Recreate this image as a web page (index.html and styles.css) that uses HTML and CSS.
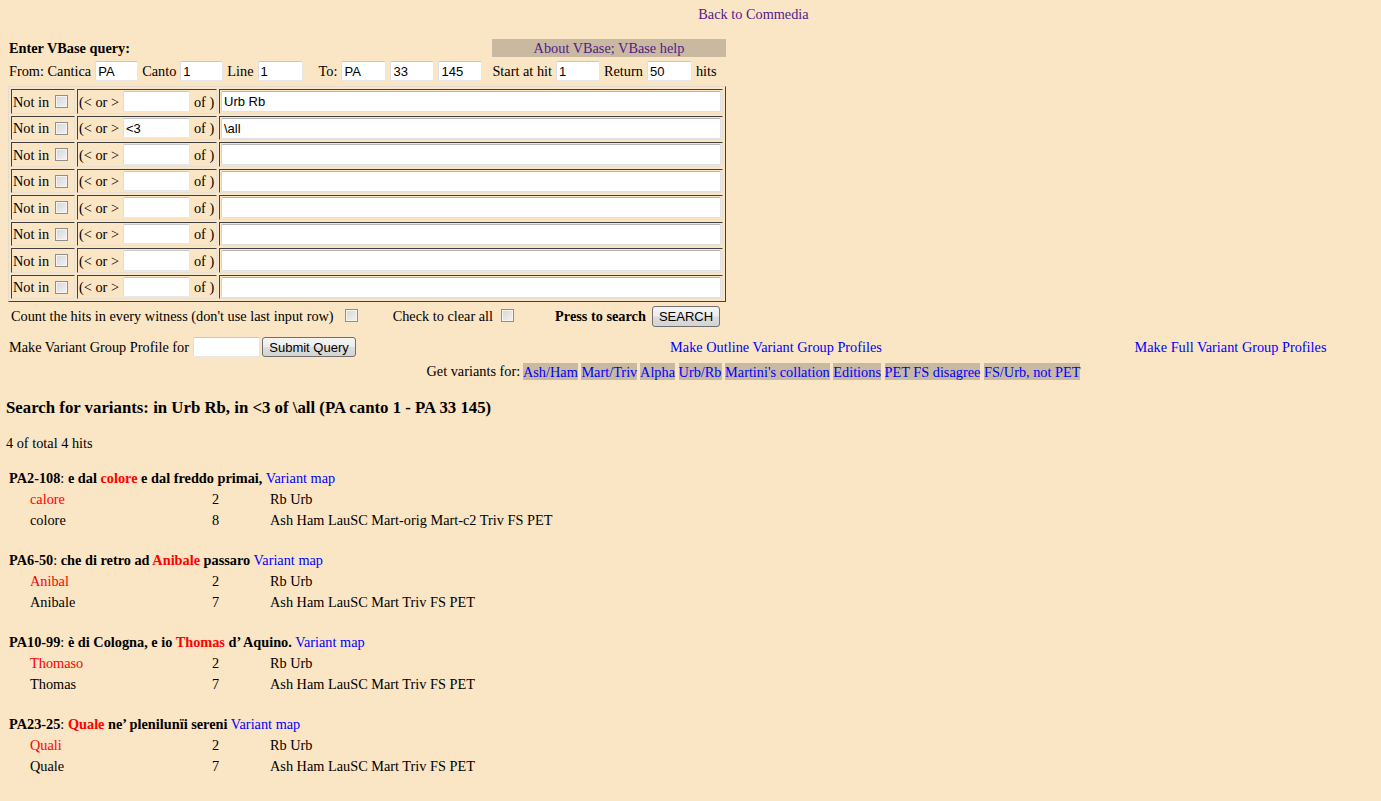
FILE: index.html
```html
<!DOCTYPE html>
<html>
<head>
<meta charset="utf-8">
<title>VBase</title>
<link rel="stylesheet" href="styles.css">
</head>
<body>
<div class="top"><a class="visited" href="#">Back to Commedia</a></div>

<form class="query">
  <div class="head-row">
    <b>Enter VBase query:</b>
    <a class="help visited" href="#">About VBase; VBase help</a>
  </div>

  <div class="range-row">
    <span>From: Cantica</span><input class="txt w43" value="PA">
    <span>Canto</span><input class="txt w43" value="1">
    <span>Line</span><input class="txt w45" value="1">
    <span class="ml-to">To:</span><input class="txt w45" value="PA"><input class="txt w44 tight" value="33"><input class="txt w44" value="145">
    <span class="ml-start">Start at hit</span><input class="txt w44" value="1">
    <span>Return</span><input class="txt w45" value="50">
    <span>hits</span>
  </div>

  <table class="crit">
    <tr><td class="c1"><span class="cell">Not in <input type="checkbox" class="cb"></span></td><td class="c2"><span class="cell">(&lt; or &gt; <input class="txt small"> <span class="of">of )</span></span></td><td class="c3"><input class="txt big" value="Urb Rb"></td></tr>
    <tr><td class="c1"><span class="cell">Not in <input type="checkbox" class="cb"></span></td><td class="c2"><span class="cell">(&lt; or &gt; <input class="txt small" value="&lt;3"> <span class="of">of )</span></span></td><td class="c3"><input class="txt big" value="\all"></td></tr>
    <tr><td class="c1"><span class="cell">Not in <input type="checkbox" class="cb"></span></td><td class="c2"><span class="cell">(&lt; or &gt; <input class="txt small"> <span class="of">of )</span></span></td><td class="c3"><input class="txt big"></td></tr>
    <tr><td class="c1"><span class="cell">Not in <input type="checkbox" class="cb"></span></td><td class="c2"><span class="cell">(&lt; or &gt; <input class="txt small"> <span class="of">of )</span></span></td><td class="c3"><input class="txt big"></td></tr>
    <tr><td class="c1"><span class="cell">Not in <input type="checkbox" class="cb"></span></td><td class="c2"><span class="cell">(&lt; or &gt; <input class="txt small"> <span class="of">of )</span></span></td><td class="c3"><input class="txt big"></td></tr>
    <tr><td class="c1"><span class="cell">Not in <input type="checkbox" class="cb"></span></td><td class="c2"><span class="cell">(&lt; or &gt; <input class="txt small"> <span class="of">of )</span></span></td><td class="c3"><input class="txt big"></td></tr>
    <tr><td class="c1"><span class="cell">Not in <input type="checkbox" class="cb"></span></td><td class="c2"><span class="cell">(&lt; or &gt; <input class="txt small"> <span class="of">of )</span></span></td><td class="c3"><input class="txt big"></td></tr>
    <tr><td class="c1"><span class="cell">Not in <input type="checkbox" class="cb"></span></td><td class="c2"><span class="cell">(&lt; or &gt; <input class="txt small"> <span class="of">of )</span></span></td><td class="c3"><input class="txt big"></td></tr>
  </table>

  <div class="count-row">
    <span>Count the hits in every witness (don't use last input row)</span>
    <input type="checkbox" class="cb cb-count">
    <span class="clear-lbl">Check to clear all</span>
    <input type="checkbox" class="cb cb-clear">
    <b class="press">Press to search</b>
    <button type="button" class="btn search">SEARCH</button>
  </div>

  <div class="profile-row">
    <div class="prof-left">
      <span>Make Variant Group Profile for</span>
      <input class="txt w67">
      <button type="button" class="btn submit">Submit Query</button>
    </div>
    <a class="blue center" href="#">Make Outline Variant Group Profiles</a>
    <a class="blue center" href="#">Make Full Variant Group Profiles</a>
  </div>

  <div class="variants-row">Get variants for: <a class="chip" href="#">Ash/Ham</a> <a class="chip" href="#">Mart/Triv</a> <a class="chip" href="#">Alpha</a> <a class="chip" href="#">Urb/Rb</a> <a class="chip" href="#">Martini's collation</a> <a class="chip" href="#">Editions</a> <a class="chip" href="#">PET FS disagree</a> <a class="chip" href="#">FS/Urb, not PET</a></div>
</form>

<h3 class="result-title">Search for variants: in Urb Rb, in &lt;3 of \all (PA canto 1 - PA 33 145)</h3>
<p class="total">4 of total 4 hits</p>

<div class="hits">
  <div class="hit">
    <div class="hit-head"><b>PA2-108</b>: <b>e dal <span class="red">colore</span> e dal freddo primai,</b> <a class="blue" href="#">Variant map</a></div>
    <div class="var"><span class="red">calore</span><span>2</span><span>Rb Urb</span></div>
    <div class="var"><span>colore</span><span>8</span><span>Ash Ham LauSC Mart-orig Mart-c2 Triv FS PET</span></div>
  </div>
  <div class="hit">
    <div class="hit-head"><b>PA6-50</b>: <b>che di retro ad <span class="red">Anibale</span> passaro</b> <a class="blue" href="#">Variant map</a></div>
    <div class="var"><span class="red">Anibal</span><span>2</span><span>Rb Urb</span></div>
    <div class="var"><span>Anibale</span><span>7</span><span>Ash Ham LauSC Mart Triv FS PET</span></div>
  </div>
  <div class="hit">
    <div class="hit-head"><b>PA10-99</b>: <b>è di Cologna, e io <span class="red">Thomas</span> d’ Aquino.</b> <a class="blue" href="#">Variant map</a></div>
    <div class="var"><span class="red">Thomaso</span><span>2</span><span>Rb Urb</span></div>
    <div class="var"><span>Thomas</span><span>7</span><span>Ash Ham LauSC Mart Triv FS PET</span></div>
  </div>
  <div class="hit">
    <div class="hit-head"><b>PA23-25</b>: <b><span class="red">Quale</span> ne’ plenilunïi sereni</b> <a class="blue" href="#">Variant map</a></div>
    <div class="var"><span class="red">Quali</span><span>2</span><span>Rb Urb</span></div>
    <div class="var"><span>Quale</span><span>7</span><span>Ash Ham LauSC Mart Triv FS PET</span></div>
  </div>
</div>
</body>
</html>
```

FILE: styles.css
```css
html, body {
  margin: 0;
  padding: 0;
  background: #fae5c4;
}
body {
  font-family: "Liberation Serif", "Times New Roman", serif;
  font-size: 14.3px;
  color: #000;
  line-height: 16px;
}
a { text-decoration: none; }
.visited { color: #551a8b; }
.blue { color: #0000ff; }
.red { color: #ff0000; }

.top {
  padding: 6px 0 0 126px;
  text-align: center;
  line-height: 16px;
}

.query { margin: 0; }

.head-row {
  margin-top: 17px;
  padding-left: 9px;
  display: grid;
  grid-template-columns: 483px 234px;
  align-items: center;
  height: 18px;
}
.help {
  display: block;
  background: #c9b9a1;
  height: 18px;
  line-height: 19px;
  text-align: center;
}

.range-row {
  margin-top: 4px;
  padding-left: 9px;
  display: flex;
  align-items: center;
  gap: 4px;
  height: 20px;
}
.ml-to { margin-left: 12px; }
.ml-start { margin-left: 6px; }
.tight { margin-left: -1px; }

.txt {
  box-sizing: border-box;
  height: 20px;
  margin: 0;
  padding: 1px 2px;
  font-family: "Liberation Sans", Arial, sans-serif;
  font-size: 13px;
  color: #000;
  background: #fff;
  border: 1px solid;
  border-color: #c8c8c8 #e6e6e6 #e6e6e6 #dedede;
  border-radius: 2px;
  outline: none;
}
.w43 { width: 43px; }
.w44 { width: 44px; }
.w45 { width: 45px; }
.w67 { width: 67px; }

.crit {
  margin: 5px 0 0 8px;
  border-collapse: separate;
  border-spacing: 2px;
  border: 1px solid;
  border-color: #e4dcd0 #404040 #404040 #e4dcd0;
  table-layout: fixed;
}
.crit td {
  border: 1px solid;
  border-color: #404040 #e8e0d4 #e8e0d4 #404040;
  padding: 1px 1px 0.5px 1px;
  vertical-align: middle;
  white-space: nowrap;
  height: 21px;
}
.crit .c1 { width: 60px; }
.crit .c2 { width: 136px; }
.crit .c3 { width: 500px; }
.cell {
  display: flex;
  align-items: center;
  height: 21px;
  gap: 4px;
}
.crit .c1 .cb { margin-left: 2px; }
.small {
  width: 67px;
  height: 20.5px;
  margin-left: 0;
}
.big {
  width: 500px;
  height: 21px;
  display: block;
  border-color: #b4b4b4 #e0e0e0 #e0e0e0 #d4d4d4;
}

.cb {
  -webkit-appearance: none;
  appearance: none;
  box-sizing: border-box;
  width: 13px;
  height: 13px;
  margin: 0;
  border: 1px solid #8f8f8f;
  background: linear-gradient(135deg, #d6d6d6, #f2f2f2);
  box-shadow: inset 0 0 0 1px #f4f4f4;
  flex: none;
}

.count-row {
  margin-top: 3px;
  padding-left: 11px;
  display: flex;
  align-items: center;
  height: 21px;
}
.cb-count { margin-left: 11px; }
.clear-lbl { margin-left: 35px; }
.cb-clear { margin-left: 8px; }
.press { margin-left: 41px; }

.btn {
  box-sizing: border-box;
  height: 21px;
  margin: 0;
  padding: 0 6px;
  font-family: "Liberation Sans", Arial, sans-serif;
  font-size: 13px;
  color: #000;
  border: 1px solid #707070;
  border-radius: 3px;
  background: linear-gradient(#f4f4f4 0%, #ececec 48%, #dcdcdc 52%, #d4d4d4 100%);
}
.search { width: 68px; margin-left: 6px; position: relative; top: 1px; }
.submit { width: 94px; height: 20px; margin-left: 2px; }

.profile-row {
  margin-top: 11px;
  padding-left: 9px;
  display: grid;
  grid-template-columns: 455px 624px 1fr;
  align-items: center;
  height: 20px;
  padding-right: 8px;
}
.prof-left {
  display: flex;
  align-items: center;
}
.prof-left .w67 { margin-left: 4px; height: 20px; }
.center { text-align: center; }

.variants-row {
  margin-top: 6px;
  padding-left: 126px;
  text-align: center;
  line-height: 17px;
}
.chip {
  color: #0000ff;
  background: #c9b9a1;
  padding: 0.5px 0;
}

.result-title {
  margin: 18px 0 0 6px;
  font-size: 16.8px;
  line-height: 20px;
}
.total {
  margin: 17px 0 0 6px;
  line-height: 16px;
}

.hits {
  margin-top: 17px;
}
.hit {
  margin-bottom: 19px;
}
.hit-head {
  padding-left: 9px;
  line-height: 21px;
}
.var {
  display: grid;
  grid-template-columns: 182px 58px auto;
  padding-left: 30px;
  line-height: 21px;
}
```
